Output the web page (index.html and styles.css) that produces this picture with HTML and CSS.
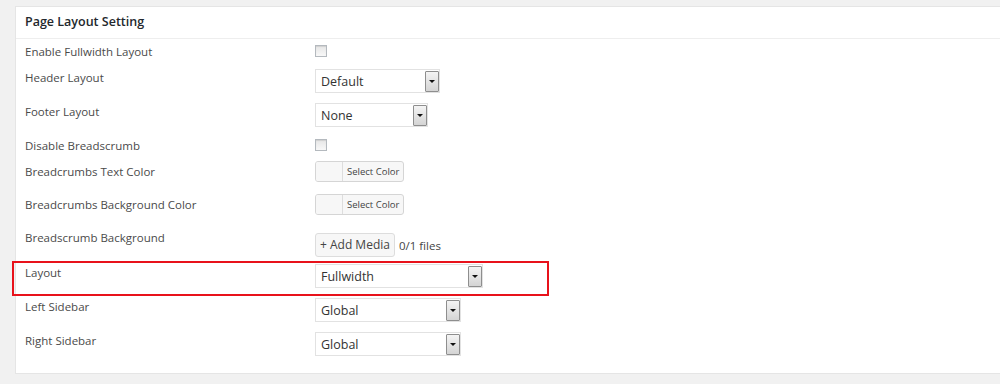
FILE: index.html
```html
<!DOCTYPE html>
<html lang="en">
<head>
    <meta charset="UTF-8">
    <title>Page Layout Setting</title>
    <link rel="stylesheet" href="styles.css">
</head>
<body>
    <div class="panel">
        <div class="panel-header">
            <h2>Page Layout Setting</h2>
        </div>

        <div class="row row-check">
            <div class="label">Enable Fullwidth Layout</div>
            <div class="field"><span class="checkbox"></span></div>
        </div>

        <div class="row row-select">
            <div class="label">Header Layout</div>
            <div class="field">
                <div class="select w-default"><span class="value">Default</span><span class="arrow"></span></div>
            </div>
        </div>

        <div class="row row-select">
            <div class="label">Footer Layout</div>
            <div class="field">
                <div class="select w-none"><span class="value">None</span><span class="arrow"></span></div>
            </div>
        </div>

        <div class="row row-check">
            <div class="label">Disable Breadscrumb</div>
            <div class="field"><span class="checkbox"></span></div>
        </div>

        <div class="row row-color">
            <div class="label">Breadcrumbs Text Color</div>
            <div class="field">
                <div class="color-btn"><span class="swatch"></span><span class="color-text">Select Color</span></div>
            </div>
        </div>

        <div class="row row-color">
            <div class="label">Breadcrumbs Background Color</div>
            <div class="field">
                <div class="color-btn"><span class="swatch"></span><span class="color-text">Select Color</span></div>
            </div>
        </div>

        <div class="row row-media">
            <div class="label">Breadscrumb Background</div>
            <div class="field">
                <span class="media-btn">+ Add Media</span>
                <span class="files">0/1 files</span>
            </div>
        </div>

        <div class="row row-select highlighted">
            <div class="label">Layout</div>
            <div class="field">
                <div class="select w-full"><span class="value">Fullwidth</span><span class="arrow"></span></div>
            </div>
        </div>

        <div class="row row-select">
            <div class="label">Left Sidebar</div>
            <div class="field">
                <div class="select w-global"><span class="value">Global</span><span class="arrow"></span></div>
            </div>
        </div>

        <div class="row row-select">
            <div class="label">Right Sidebar</div>
            <div class="field">
                <div class="select w-global"><span class="value">Global</span><span class="arrow"></span></div>
            </div>
        </div>
    </div>
</body>
</html>
```

FILE: styles.css
```css
body {
    font-family: 'Open Sans', 'Liberation Sans', sans-serif;
    margin: 0;
    padding: 0;
    background-color: #f1f1f1;
    color: #444;
    overflow: hidden;
}
.panel {
    margin: 6px -20px 0 15px;
    background-color: #fff;
    border: 1px solid #e5e5e5;
    height: 368px;
    box-sizing: border-box;
}
.panel-header {
    height: 31px;
    border-bottom: 1px solid #eee;
    padding-left: 9px;
}
.panel-header h2 {
    margin: 0;
    padding-top: 7px;
    font-size: 12.5px;
    line-height: 16px;
    font-weight: 600;
    color: #23282d;
}
.row {
    display: flex;
    align-items: flex-start;
    padding-left: 9px;
}
.row-check { height: 26px; }
.row-select { height: 34px; }
.row-color { height: 33px; }
.row-media { height: 35px; }
.label {
    width: 290px;
    padding-top: 5px;
    font-size: 11.5px;
    line-height: 16px;
    color: #4a4a4a;
}
.field {
    display: flex;
    align-items: center;
}
.row-check .field { margin-top: 6px; }
.row-select .field { margin-top: 4px; }
.row-color .field { margin-top: 2px; }
.row-media .field { margin-top: 8px; }
.checkbox {
    width: 10px;
    height: 10px;
    border: 1px solid #b4b9be;
    background: linear-gradient(#e6e6e6, #f8f8f8);
    box-shadow: inset 0 1px 1px rgba(0, 0, 0, 0.1);
}
.select {
    height: 24px;
    box-sizing: border-box;
    border: 1px solid #e2e2e2;
    background-color: #fff;
    display: flex;
    align-items: center;
    justify-content: space-between;
    padding-left: 5px;
}
.w-default { width: 125px; }
.w-none { width: 113px; }
.w-full { width: 168px; }
.w-global { width: 146px; }
.select .value {
    font-size: 12.5px;
    color: #333;
}
.select .arrow {
    width: 14px;
    height: 21px;
    box-sizing: border-box;
    border: 1px solid #8e8e8e;
    border-radius: 1px;
    background: linear-gradient(#f4f4f4, #d4d4d4);
    display: flex;
    align-items: center;
    justify-content: center;
}
.select .arrow::after {
    content: "";
    border-left: 3px solid transparent;
    border-right: 3px solid transparent;
    border-top: 3px solid #111;
}
.color-btn {
    display: flex;
    height: 21px;
    box-sizing: border-box;
    border: 1px solid #d5d5d5;
    border-radius: 3px;
    background-color: #f7f7f7;
    overflow: hidden;
}
.swatch {
    width: 26px;
    background-color: #f7f7f7;
    border-right: 1px solid #ddd;
}
.color-text {
    padding: 0 4px;
    font-size: 9.5px;
    line-height: 19px;
    color: #444;
}
.media-btn {
    height: 24px;
    box-sizing: border-box;
    border: 1px solid #ddd;
    border-radius: 3px;
    background-color: #f7f7f7;
    padding: 0 4px;
    font-size: 12px;
    line-height: 22px;
    color: #444;
    white-space: nowrap;
}
.files {
    margin-left: 4px;
    font-size: 11.5px;
    color: #444;
}
.highlighted {
    position: relative;
}
.highlighted::after {
    content: "";
    position: absolute;
    left: -4px;
    top: 1px;
    width: 537px;
    height: 35px;
    box-sizing: border-box;
    border: 2px solid #e8121b;
}
```
